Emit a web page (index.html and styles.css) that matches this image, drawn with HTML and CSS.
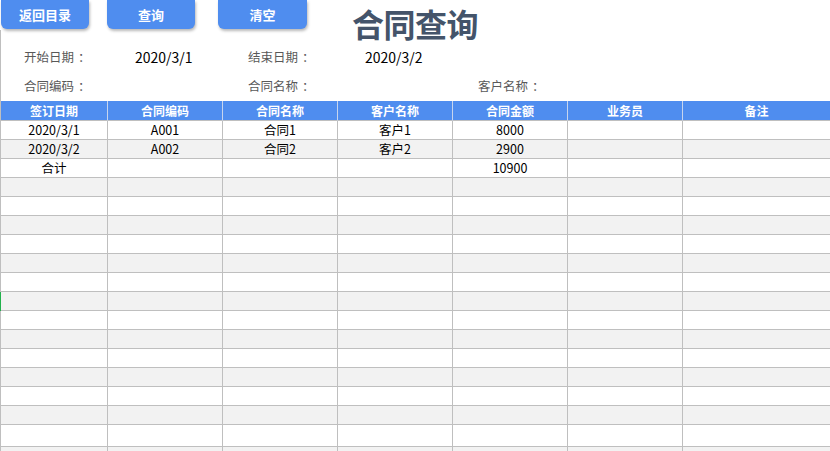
FILE: index.html
```html
<!DOCTYPE html>
<html lang="zh-CN">
<head>
<meta charset="utf-8">
<title>合同查询</title>
<link rel="stylesheet" href="styles.css">
</head>
<body>
<div class="page">
  <div class="toolbar">
    <button class="btn btn-back">返回目录</button>
    <button class="btn btn-query">查询</button>
    <button class="btn btn-clear">清空</button>
    <h1 class="title">合同查询</h1>
  </div>
  <div class="sheet">
    <div class="form">
      <div class="form-row">
        <span class="label">开始日期<span class="colon">：</span></span>
        <span class="value">2020/3/1</span>
        <span class="label">结束日期<span class="colon">：</span></span>
        <span class="value">2020/3/2</span>
      </div>
      <div class="form-row">
        <span class="label">合同编码<span class="colon">：</span></span>
        <span class="value"></span>
        <span class="label">合同名称<span class="colon">：</span></span>
        <span class="value"></span>
        <span class="label">客户名称<span class="colon">：</span></span>
      </div>
    </div>
    <div class="grid">
      <div class="row head">
        <div class="cell">签订日期</div><div class="cell">合同编码</div><div class="cell">合同名称</div><div class="cell">客户名称</div><div class="cell">合同金额</div><div class="cell">业务员</div><div class="cell">备注</div>
      </div>
      <div class="row">
        <div class="cell">2020/3/1</div><div class="cell">A001</div><div class="cell">合同1</div><div class="cell">客户1</div><div class="cell">8000</div><div class="cell"></div><div class="cell"></div>
      </div>
      <div class="row alt">
        <div class="cell">2020/3/2</div><div class="cell">A002</div><div class="cell">合同2</div><div class="cell">客户2</div><div class="cell">2900</div><div class="cell"></div><div class="cell"></div>
      </div>
      <div class="row">
        <div class="cell">合计</div><div class="cell"></div><div class="cell"></div><div class="cell"></div><div class="cell">10900</div><div class="cell"></div><div class="cell"></div>
      </div>
      <div class="row alt"><div class="cell"></div><div class="cell"></div><div class="cell"></div><div class="cell"></div><div class="cell"></div><div class="cell"></div><div class="cell"></div></div>
      <div class="row"><div class="cell"></div><div class="cell"></div><div class="cell"></div><div class="cell"></div><div class="cell"></div><div class="cell"></div><div class="cell"></div></div>
      <div class="row alt"><div class="cell"></div><div class="cell"></div><div class="cell"></div><div class="cell"></div><div class="cell"></div><div class="cell"></div><div class="cell"></div></div>
      <div class="row"><div class="cell"></div><div class="cell"></div><div class="cell"></div><div class="cell"></div><div class="cell"></div><div class="cell"></div><div class="cell"></div></div>
      <div class="row alt"><div class="cell"></div><div class="cell"></div><div class="cell"></div><div class="cell"></div><div class="cell"></div><div class="cell"></div><div class="cell"></div></div>
      <div class="row"><div class="cell"></div><div class="cell"></div><div class="cell"></div><div class="cell"></div><div class="cell"></div><div class="cell"></div><div class="cell"></div></div>
      <div class="row alt active"><div class="cell"></div><div class="cell"></div><div class="cell"></div><div class="cell"></div><div class="cell"></div><div class="cell"></div><div class="cell"></div></div>
      <div class="row"><div class="cell"></div><div class="cell"></div><div class="cell"></div><div class="cell"></div><div class="cell"></div><div class="cell"></div><div class="cell"></div></div>
      <div class="row alt"><div class="cell"></div><div class="cell"></div><div class="cell"></div><div class="cell"></div><div class="cell"></div><div class="cell"></div><div class="cell"></div></div>
      <div class="row"><div class="cell"></div><div class="cell"></div><div class="cell"></div><div class="cell"></div><div class="cell"></div><div class="cell"></div><div class="cell"></div></div>
      <div class="row alt"><div class="cell"></div><div class="cell"></div><div class="cell"></div><div class="cell"></div><div class="cell"></div><div class="cell"></div><div class="cell"></div></div>
      <div class="row"><div class="cell"></div><div class="cell"></div><div class="cell"></div><div class="cell"></div><div class="cell"></div><div class="cell"></div><div class="cell"></div></div>
      <div class="row alt"><div class="cell"></div><div class="cell"></div><div class="cell"></div><div class="cell"></div><div class="cell"></div><div class="cell"></div><div class="cell"></div></div>
      <div class="row tall"><div class="cell"></div><div class="cell"></div><div class="cell"></div><div class="cell"></div><div class="cell"></div><div class="cell"></div><div class="cell"></div></div>
      <div class="row alt"><div class="cell"></div><div class="cell"></div><div class="cell"></div><div class="cell"></div><div class="cell"></div><div class="cell"></div><div class="cell"></div></div>
    </div>
  </div>
</div>
</body>
</html>
```
FILE: styles.css
```css
html, body {
  margin: 0;
  padding: 0;
  background: #ffffff;
  overflow: hidden;
}
body {
  font-family: "Noto Sans CJK SC", "Noto Sans", sans-serif;
  width: 830px;
  height: 451px;
}
.page {
  width: 830px;
}
.toolbar {
  display: flex;
  align-items: flex-start;
}
.btn {
  box-sizing: border-box;
  height: 29px;
  width: 88px;
  border: none;
  border-radius: 0 0 6px 6px;
  background: #4f8def;
  color: #ffffff;
  font-family: "Noto Sans CJK SC", sans-serif;
  font-weight: bold;
  font-size: 13px;
  line-height: 29px;
  padding: 0 0 2px;
  box-shadow: 1px 2px 3px rgba(0, 0, 0, 0.28);
  cursor: pointer;
}
.btn-back { margin-left: 1px; }
.btn-query { margin-left: 18px; }
.btn-clear { margin-left: 23px; width: 89px; }
.title {
  margin: 0 0 -14px 45px;
  padding: 2px 0 0;
  font-size: 32px;
  line-height: 42px;
  font-weight: bold;
  color: #44546a;
  letter-spacing: -0.5px;
  white-space: nowrap;
}
.sheet {
  border-left: 1px solid #bfbfbf;
}
.form {
  padding: 16px 0 4px 23px;
  display: flex;
  flex-direction: column;
  gap: 7px;
  height: 71px;
  box-sizing: border-box;
}
.form-row {
  display: grid;
  grid-template-columns: 111px 113px 117px 113px 120px;
  height: 22px;
  line-height: 22px;
  font-size: 12.5px;
}
.label {
  color: #595959;
  white-space: nowrap;
}
.colon {
  padding-left: 4px;
}
.value {
  color: #000000;
  font-size: 14px;
}
.grid {
  width: 830px;
}
.row {
  display: grid;
  grid-template-columns: 107px 115px 115px 115px 115px 115px 148px;
  height: 19px;
  background: #ffffff;
}
.row.alt {
  background: #f2f2f2;
}
.row.tall {
  height: 22px;
}
.row.active {
  box-shadow: inset 1px 0 0 #22b14c;
  margin-left: -1px;
  padding-left: 1px;
}
.cell {
  box-sizing: border-box;
  border-right: 1px solid #bfbfbf;
  border-bottom: 1px solid #bfbfbf;
  font-size: 12.5px;
  line-height: 18px;
  text-align: center;
  color: #000000;
  overflow: hidden;
  white-space: nowrap;
}
.row.head {
  height: 20px;
  background: #4f8def;
}
.row.head .cell {
  color: #ffffff;
  font-weight: bold;
  font-size: 12px;
  line-height: 19px;
  border-right-color: #c7d5ee;
  border-bottom-color: #bfbfbf;
}
```
